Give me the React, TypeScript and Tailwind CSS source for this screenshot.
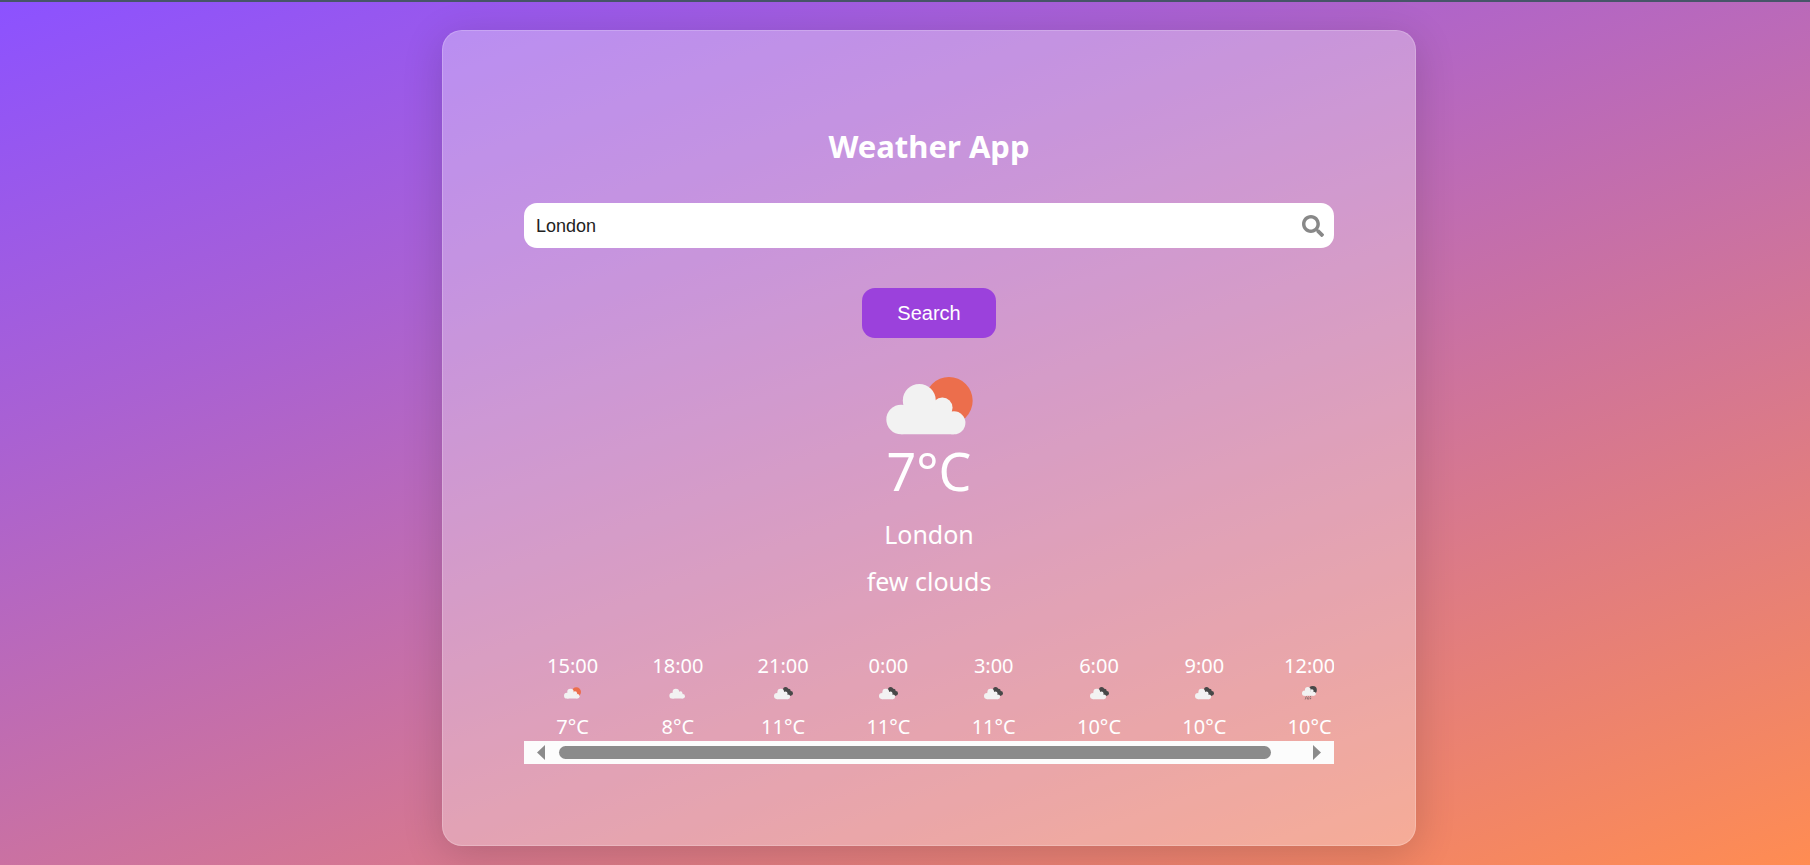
import { useState } from "react";
import { FaSearch } from "react-icons/fa";

type IconKind = "sun" | "cloud" | "broken" | "rain";

const FORECAST: { time: string; icon: IconKind; temp: number }[] = [
  { time: "15:00", icon: "sun", temp: 7 },
  { time: "18:00", icon: "cloud", temp: 8 },
  { time: "21:00", icon: "broken", temp: 11 },
  { time: "0:00", icon: "broken", temp: 11 },
  { time: "3:00", icon: "broken", temp: 11 },
  { time: "6:00", icon: "broken", temp: 10 },
  { time: "9:00", icon: "broken", temp: 10 },
  { time: "12:00", icon: "rain", temp: 10 },
];

function Cloud() {
  return (
    <g>
      <circle cx="100" cy="71" r="50" />
      <circle cx="45" cy="129" r="45" />
      <circle cx="170" cy="93" r="31" />
      <circle cx="205" cy="139" r="35" />
      <path d="M45 90h70l90 30v54H45z" />
    </g>
  );
}

function WeatherIcon({ kind, className }: { kind: IconKind; className: string }) {
  if (kind === "sun") {
    return (
      <svg viewBox="0 0 262 176" className={className} aria-hidden="true">
        <circle cx="190" cy="72" r="72" fill="#ec6e4c" />
        <g fill="#f2f2f2">
          <Cloud />
        </g>
      </svg>
    );
  }
  if (kind === "cloud") {
    return (
      <svg viewBox="-6 0 262 176" className={className} aria-hidden="true">
        <g fill="#f2f2f2">
          <Cloud />
        </g>
      </svg>
    );
  }
  if (kind === "broken") {
    return (
      <svg viewBox="0 0 282 186" className={className} aria-hidden="true">
        <g fill="#484848">
          <circle cx="172" cy="42" r="38" />
          <circle cx="216" cy="62" r="32" />
          <circle cx="248" cy="98" r="34" />
          <path d="M150 60l60-30 46 44-6 56-50 10z" />
        </g>
        <g fill="#f2f2f2" transform="translate(0 10)">
          <Cloud />
        </g>
      </svg>
    );
  }
  return (
    <svg viewBox="0 0 220 206" className={className} aria-hidden="true">
      <circle cx="158" cy="60" r="60" fill="#484848" />
      <g fill="#f2f2f2" transform="translate(0 -4) scale(.85)">
        <Cloud />
      </g>
      <g stroke="#484848" strokeWidth="10" strokeLinecap="round">
        <path d="M62 158l-6 10M92 160l-6 10M124 156l-6 10M74 182l8 6M100 184l-6 10M128 180l-4 10M54 184l-4 8" />
      </g>
    </svg>
  );
}

function ScrollTrack() {
  return (
    <div className="flex h-[23px] items-center bg-[#fcfcfc] px-[13px]">
      <button type="button" aria-label="Scroll left" className="text-[#8b8b8b]">
        <svg viewBox="0 0 8 15" className="h-[15px] w-2 fill-current">
          <path d="M8 0v15L0 7.5z" />
        </svg>
      </button>
      <div className="mx-[14px] flex-1 pr-[28px]">
        <div className="h-[13px] rounded-full bg-[#8b8b8b]" />
      </div>
      <button type="button" aria-label="Scroll right" className="text-[#8b8b8b]">
        <svg viewBox="0 0 8 15" className="h-[15px] w-2 fill-current">
          <path d="M0 0v15l8-7.5z" />
        </svg>
      </button>
    </div>
  );
}

export default function App() {
  const [city, setCity] = useState("London");

  return (
    <div className="flex min-h-screen items-start justify-center border-t-2 border-[#475569] bg-[linear-gradient(160deg,#8c52ff,53%,#ff8c52)] pt-7 pb-4 pl-12 font-['Noto_Sans',sans-serif] text-white">
      <main className="w-full max-w-[974px] rounded-[20px] border border-white/20 bg-white/32 p-[81px] text-center shadow-[0_8px_40px_rgba(0,0,0,0.16)]">
        <h1 className="pt-3 text-[31px] leading-[44px] font-bold">Weather App</h1>

        <form onSubmit={(e) => e.preventDefault()}>
          <div className="mt-[35px] flex h-[45px] items-center rounded-[13px] bg-white pr-[10px] pl-3">
            <input
              type="text"
              aria-label="City"
              value={city}
              onChange={(e) => setCity(e.target.value)}
              className="min-w-0 flex-1 bg-transparent font-['Liberation_Sans',Arial,sans-serif] text-[18px] leading-6 text-[#222] outline-none"
            />
            <FaSearch className="size-[22px] text-[#888]" />
          </div>
          <button
            type="submit"
            className="mt-10 h-[50px] w-[134px] rounded-[13px] bg-[#9b41dc] font-['Liberation_Sans',Arial,sans-serif] text-[20px]"
          >
            Search
          </button>
        </form>

        <section aria-label="Current weather">
          <WeatherIcon kind="sun" className="mx-auto mt-[39px] h-[58px] w-[87px]" />
          <p className="mt-1 text-[52px] leading-[64px]">7°C</p>
          <p className="mt-[11px] text-[25px] leading-10">London</p>
          <p className="mt-[7px] text-[25px] leading-10">few clouds</p>
        </section>

        <section aria-label="Hourly forecast" className="mt-[51px]">
          <ul className="flex gap-[1%] overflow-hidden">
            {FORECAST.map((f) => (
              <li key={f.time} className="w-[12%] shrink-0 text-[20px] leading-7">
                <p>{f.time}</p>
                <WeatherIcon
                  kind={f.icon}
                  className={
                    f.icon === "broken"
                      ? "mx-auto mt-[6px] mb-[13px] h-[14px] w-[19px]"
                      : "mx-auto mt-[6px] mb-[13px] h-[14px] w-[17px]"
                  }
                />
                <p>{f.temp}°C</p>
              </li>
            ))}
          </ul>
          <ScrollTrack />
        </section>
      </main>
    </div>
  );
}
